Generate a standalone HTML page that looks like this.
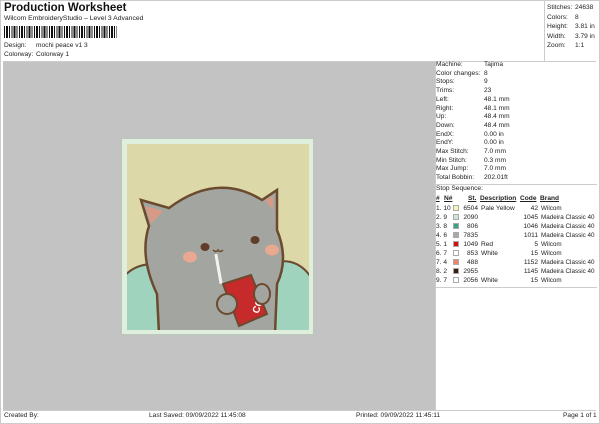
<!DOCTYPE html>
<html><head><meta charset="utf-8"><style>
*{margin:0;padding:0;box-sizing:border-box}
body{width:600px;height:424px;background:#fff;font-family:"Liberation Sans",sans-serif;color:#222;position:relative;overflow:hidden;font-size:6.6px}
.a{position:absolute;white-space:nowrap}
.sw{display:inline-block;width:6px;height:6px;border:1px solid #aaa;vertical-align:-1px}
</style></head><body>
<div class="a" style="left:0;top:0;width:600px;height:424px;border:1px solid #ccc"></div>
<div class="a" style="left:4px;top:2px;font-size:11.5px;font-weight:bold;color:#111">Production Worksheet</div>
<div class="a" style="left:4px;top:15px;font-size:6.8px">Wilcom EmbroideryStudio – Level 3 Advanced</div>
<div class="a" style="left:4px;top:26px;width:113px;height:12px;background:repeating-linear-gradient(90deg,#111 0 1px,#fff 1px 2px,#111 2px 4px,#fff 4px 5px,#111 5px 6px,#fff 6px 7.5px)"></div>
<div class="a" style="left:4px;top:42px">Design:</div><div class="a" style="left:36px;top:42px">mochi peace v1 3</div>
<div class="a" style="left:4px;top:51px">Colorway:</div><div class="a" style="left:36px;top:51px">Colorway 1</div>
<div class="a" style="left:544px;top:0;width:1px;height:62px;background:#ccc"></div>
<div class="a" style="left:547px;top:3px;line-height:9.5px">Stitches:<br>Colors:<br>Height:<br>Width:<br>Zoom:</div>
<div class="a" style="left:575px;top:3px;line-height:9.5px">24638<br>8<br>3.81 in<br>3.79 in<br>1:1</div>
<div class="a" style="left:3px;top:61px;width:593px;height:1px;background:#ccc"></div>
<div class="a" style="left:3px;top:62px;width:432px;height:348px;background:#c3c3c3"></div>
<!-- design -->
<div class="a" style="left:121px;top:138px;width:193px;height:197px;background:#dfeedd;border:1px solid #b9c8b8"></div>
<div class="a" style="left:127px;top:144px;width:182px;height:186px;background:#dcd8a8;overflow:hidden">
<svg width="182" height="186" viewBox="0 0 182 186">
<path d="M-5 135 Q10 115 40 122 L55 190 L-5 190Z" fill="#9fd3bd" stroke="#6b4a2e" stroke-width="2"/>
<path d="M140 120 Q170 110 185 135 L185 190 L140 190Z" fill="#9fd3bd" stroke="#6b4a2e" stroke-width="2"/>
<path d="M32 190 L30 150 Q12 112 22 82 L14 56 L42 64 Q90 28 135 56 L150 46 L150 86 Q162 115 150 140 L148 190Z" fill="#a3a5a0" stroke="#6b4a2e" stroke-width="2.5"/>
<path d="M18 62 L36 67 L24 80Z" fill="#d79a86"/>
<path d="M138 56 L146 52 L146 66Z" fill="#d79a86"/>
<ellipse cx="78" cy="103" rx="4.5" ry="4" fill="#603e2a"/>
<ellipse cx="128" cy="96" rx="4.5" ry="4" fill="#603e2a"/>
<ellipse cx="63" cy="113" rx="7" ry="5.5" fill="#e9a890"/>
<ellipse cx="145" cy="106" rx="7" ry="5.5" fill="#e9a890"/>
<path d="M86 106 q3 3 5 0 q2 3 5 0" fill="none" stroke="#6b4a2e" stroke-width="1.5"/>
<rect x="90" y="110" width="3" height="30" fill="#f2f2f2" transform="rotate(-10 91 125)"/>
<path d="M96 140 L124 131 L140 170 L112 182 Z" fill="#c72a2a" stroke="#6b4a2e" stroke-width="2"/>
<text x="113" y="176" font-size="10" font-weight="bold" fill="#fff" font-family="Liberation Sans" transform="rotate(-70 118 160)">COLA</text>
<ellipse cx="100" cy="160" rx="10" ry="10" fill="#a3a5a0" stroke="#6b4a2e" stroke-width="2"/>
<ellipse cx="135" cy="150" rx="8" ry="10" fill="#a3a5a0" stroke="#6b4a2e" stroke-width="2"/>
</svg></div>
<!-- right panel -->
<div class="a" style="left:435px;top:62px;width:1px;height:348px;background:#ccc"></div>
<div class="a" style="left:436px;top:61px;line-height:8.7px">Machine:<br>Color changes:<br>Stops:<br>Trims:<br>Left:<br>Right:<br>Up:<br>Down:<br>EndX:<br>EndY:<br>Max Stitch:<br>Min Stitch:<br>Max Jump:<br>Total Bobbin:</div>
<div class="a" style="left:484px;top:61px;line-height:8.7px">Tajima<br>8<br>9<br>23<br>48.1 mm<br>48.1 mm<br>48.4 mm<br>48.4 mm<br>0.00 in<br>0.00 in<br>7.0 mm<br>0.3 mm<br>7.0 mm<br>202.01ft</div>
<div class="a" style="left:435px;top:184px;width:162px;height:1px;background:#ccc"></div>
<div class="a" style="left:436px;top:185px">Stop Sequence:</div>
<div class="a" style="left:436px;top:195px;font-weight:bold;text-decoration:underline">#</div>
<div class="a" style="left:444px;top:195px;font-weight:bold;text-decoration:underline">N#</div>
<div class="a" style="left:468px;top:195px;font-weight:bold;text-decoration:underline">St.</div>
<div class="a" style="left:480px;top:195px;font-weight:bold;text-decoration:underline">Description</div>
<div class="a" style="left:520px;top:195px;font-weight:bold;text-decoration:underline">Code</div>
<div class="a" style="left:540px;top:195px;font-weight:bold;text-decoration:underline">Brand</div>
<div class="a" style="left:436px;top:204px;line-height:9px">1. 10<br>2. 9<br>3. 8<br>4. 6<br>5. 1<br>6. 7<br>7. 4<br>8. 2<br>9. 7</div>
<div class="a" style="left:453px;top:204px;line-height:9px">
<span class="sw" style="background:#f7f4b8"></span><br><span class="sw" style="background:#c9ead9"></span><br><span class="sw" style="background:#3f9f86"></span><br><span class="sw" style="background:#a9aaa4"></span><br><span class="sw" style="background:#d21010"></span><br><span class="sw" style="background:#fff"></span><br><span class="sw" style="background:#f0846a"></span><br><span class="sw" style="background:#3a1d0d"></span><br><span class="sw" style="background:#fff"></span></div>
<div class="a" style="left:461px;top:204px;line-height:9px;text-align:right;width:17px">6504<br>2090<br>806<br>7835<br>1049<br>853<br>488<br>2955<br>2056</div>
<div class="a" style="left:481px;top:204px;line-height:9px">Pale Yellow<br><br><br><br>Red<br>White<br><br><br>White</div>
<div class="a" style="left:516px;top:204px;line-height:9px;text-align:right;width:22px">42<br>1045<br>1046<br>1011<br>5<br>15<br>1152<br>1145<br>15</div>
<div class="a" style="left:541px;top:204px;line-height:9px;font-size:6.3px">Wilcom<br>Madeira Classic 40<br>Madeira Classic 40<br>Madeira Classic 40<br>Wilcom<br>Wilcom<br>Madeira Classic 40<br>Madeira Classic 40<br>Wilcom</div>
<div class="a" style="left:435px;top:287px;width:162px;height:1px;background:#ccc"></div>
<!-- footer -->
<div class="a" style="left:3px;top:410px;width:593px;height:1px;background:#ccc"></div>
<div class="a" style="left:4px;top:412px">Created By:</div>
<div class="a" style="left:149px;top:412px">Last Saved: 09/09/2022 11:45:08</div>
<div class="a" style="left:356px;top:412px">Printed: 09/09/2022 11:45:11</div>
<div class="a" style="left:563px;top:412px">Page 1 of 1</div>
</body></html>
